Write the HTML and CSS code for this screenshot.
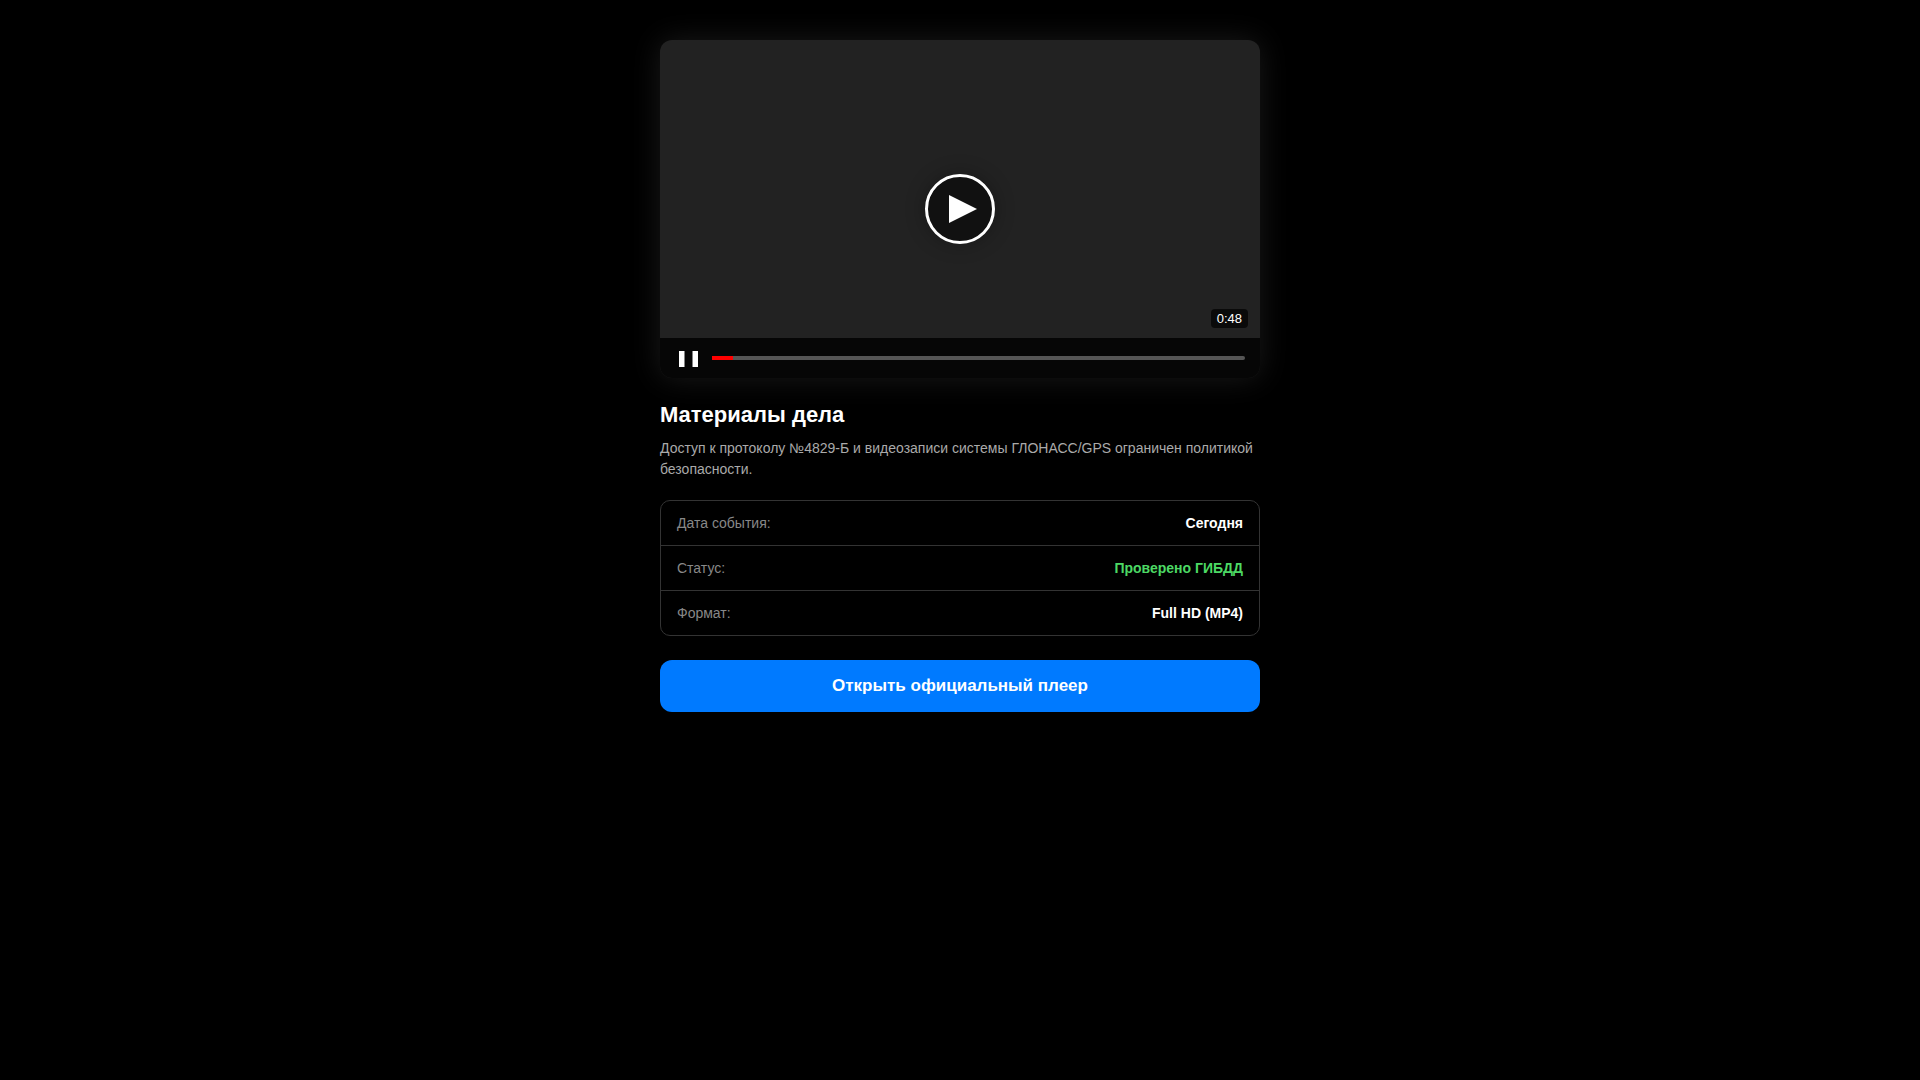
FILE: index.html
```html
<!doctype html>
<html lang="ru">
<head>
	<meta charset="utf-8">
	<meta name="viewport" content="width=device-width, initial-scale=1">
	<title>Материалы дела</title>
	<link rel="stylesheet" href="styles.css">
</head>
<body>
<div class="container">
	<div class="player">
		<button class="play" aria-label="Смотреть">
			<svg width="28" height="28" viewBox="0 0 28 28"><path d="M0 0L28 14L0 28Z" fill="#fff"/></svg>
		</button>
		<span class="duration">0:48</span>
		<div class="controls">
			<button class="pause" aria-label="Пауза">
				<svg width="27" height="18" viewBox="0 0 27 18"><path d="M4 2h5.5v16H4zM17.5 2H23v16h-5.5z" fill="#fff"/></svg>
			</button>
			<input class="progress" type="range" min="0" max="100" value="4" aria-label="Перемотка">
		</div>
	</div>
	<h1>Материалы дела</h1>
	<p class="description">Доступ к протоколу №4829-Б и видеозаписи системы ГЛОНАСС/GPS ограничен политикой безопасности.</p>
	<table class="info">
		<tr>
			<th scope="row">Дата события:</th>
			<td>Сегодня</td>
		</tr>
		<tr>
			<th scope="row">Статус:</th>
			<td class="verified">Проверено ГИБДД</td>
		</tr>
		<tr>
			<th scope="row">Формат:</th>
			<td>Full HD (MP4)</td>
		</tr>
	</table>
	<button class="open">Открыть официальный плеер</button>
</div>
</body>
</html>
```

FILE: styles.css
```css
* {
    margin: 0;
    padding: 0;
    box-sizing: border-box;
}

body {
    background: #000;
    color: #fff;
    padding: 40px 20px;
}

body, button {
    font-family: "Liberation Sans", Arial, sans-serif;
}

button {
    border: none;
    cursor: pointer;
}

svg {
    display: block;
}

.container {
    max-width: 600px;
    margin: 0 auto;
}

.player {
    position: relative;
    display: flex;
    justify-content: center;
    align-items: center;
    aspect-ratio: 16 / 9;
    background: #222;
    border-radius: 12px;
    overflow: hidden;
    box-shadow: 0 0 30px rgba(255, 255, 255, 0.1);
}

.play {
    display: flex;
    justify-content: center;
    align-items: center;
    width: 70px;
    height: 70px;
    padding-left: 6px;
    background: rgba(0, 0, 0, 0.5);
    border: 3px solid #fff;
    border-radius: 50%;
    box-shadow: 0 0 20px rgba(0, 0, 0, 0.3);
}

.duration {
    position: absolute;
    right: 12px;
    bottom: 50px;
    padding: 2px 6px;
    background: rgba(0, 0, 0, 0.7);
    border-radius: 4px;
    font-size: 13px;
}

.controls {
    position: absolute;
    left: 0;
    right: 0;
    bottom: 0;
    display: flex;
    align-items: center;
    gap: 10px;
    height: 40px;
    padding: 0 15px;
    background: rgba(0, 0, 0, 0.8);
}

.pause {
    background: none;
}

.progress {
    flex: 1;
    min-width: 0;
    height: 4px;
    appearance: none;
    background: linear-gradient(to right, #f00 4%, #555 4%);
    border-radius: 0 2px 2px 0;
}

.progress::-webkit-slider-thumb {
    appearance: none;
    width: 0;
    height: 0;
}

h1 {
    margin-top: 24px;
    font-size: 22px;
}

.description {
    margin: 10px 0 20px;
    color: #aaa;
    font-size: 14px;
    line-height: 21px;
}

.info {
    width: 100%;
    border: 1px solid #333;
    border-radius: 10px;
    border-spacing: 0;
    font-size: 14px;
    line-height: 16px;
}

.info th, .info td {
    padding: 14px 16px;
}

.info th {
    color: #888;
    font-weight: normal;
    text-align: left;
}

.info td {
    font-weight: bold;
    text-align: right;
}

.info tr + tr th, .info tr + tr td {
    border-top: 1px solid #333;
}

.info .verified {
    color: #4cd964;
}

.open {
    width: 100%;
    margin-top: 24px;
    padding: 16px;
    background: #007aff;
    border-radius: 12px;
    color: #fff;
    font-size: 17px;
    font-weight: bold;
    line-height: 20px;
}
```
